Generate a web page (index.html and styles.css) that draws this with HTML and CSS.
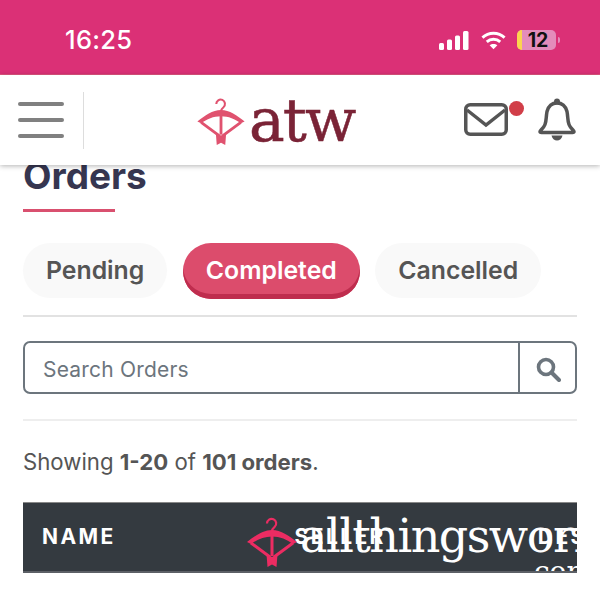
FILE: index.html
```html
<!DOCTYPE html>
<html lang="en">
<head>
    <meta charset="UTF-8">
    <meta name="viewport" content="width=device-width, initial-scale=1.0">
    <title>Orders</title>
    <link rel="stylesheet" href="styles.css">
</head>
<body>
    <svg class="defs" width="0" height="0">
        <symbol id="hanger" viewBox="0 0 50 54">
            <path d="M20 9.500a4.600 4.600 0 1 1 7.600 3.400c-1.600 1.300-2.600 2.200-2.600 4.600" fill="none" stroke="currentColor" stroke-width="2.200"/>
            <path d="M0 28C8 22 16 16 25 16S42 22 50 28L46 30C40 25.500 33 22.500 25 22.500S10 25.500 4 30Z" fill="currentColor"/>
            <path d="M4 29L23 43M46 29L27 43" fill="none" stroke="currentColor" stroke-width="3"/>
            <path d="M23.500 18h3v24h-3z" fill="currentColor"/>
            <path d="M19.500 40L25 43l5.500-3 -1 13 -4.500-2.500L20.500 53z" fill="currentColor"/>
        </symbol>
    </svg>

    <div class="status-bar">
        <span class="clock">16:25</span>
        <div class="status-icons">
            <svg class="signal" width="30" height="19" viewBox="0 0 30 19">
                <rect x="0" y="12" width="5" height="7" rx="1.500" fill="#fff"/>
                <rect x="8" y="8.500" width="5" height="10.500" rx="1.500" fill="#fff"/>
                <rect x="16" y="4.500" width="5" height="14.500" rx="1.500" fill="#fff"/>
                <rect x="24" y="0" width="5.500" height="19" rx="1.500" fill="#fff"/>
            </svg>
            <svg class="wifi" width="25" height="20" viewBox="0 0 26 20">
                <path d="M1.500 7.500C8 1.500 18 1.500 24.500 7.500" fill="none" stroke="#fff" stroke-width="3"/>
                <path d="M6 12C10 8.300 16 8.300 20 12" fill="none" stroke="#fff" stroke-width="3"/>
                <path d="M13 19.500L9 15.500C11.200 13.600 14.800 13.600 17 15.500Z" fill="#fff"/>
            </svg>
            <div class="battery"><span class="battery-level"></span><span class="battery-num">12</span></div>
            <span class="battery-tip"></span>
        </div>
    </div>

    <header class="top-nav">
        <button class="menu-btn" aria-label="Menu"><span></span><span></span><span></span></button>
        <div class="logo">
            <svg class="logo-mark" width="48" height="51"><use href="#hanger"/></svg>
            <span class="logo-text">atw</span>
        </div>
        <div class="nav-icons">
            <div class="mail">
                <svg width="44" height="33" viewBox="0 0 44 33">
                    <rect x="1.750" y="1.750" width="40.500" height="29.500" rx="4.500" fill="none" stroke="#555" stroke-width="3.500"/>
                    <path d="M3 7l19 15L41 7" fill="none" stroke="#555" stroke-width="3.500"/>
                </svg>
                <span class="mail-dot"></span>
            </div>
            <svg width="38" height="44" viewBox="0 0 38 44">
                <circle cx="19" cy="3.500" r="3" fill="#555"/>
                <path d="M2 33.500c0-1 3.500-3 5-7s1-8 2-13C10.500 8 14 5 19 5s8.500 3 10 8.500c1 5 .5 9 2 13s5 6 5 7c0 .5-.500 1-1.500 1H3.500c-1 0-1.500-.500-1.500-1z" fill="none" stroke="#555" stroke-width="3.500" stroke-linejoin="round"/>
                <path d="M13.500 37.500h11c-.5 3-3 5-5.500 5s-5-2-5.500-5z" fill="#555"/>
            </svg>
        </div>
    </header>

    <main class="content">
        <h1 class="page-title">Orders</h1>
        <div class="title-rule"></div>

        <div class="tabs">
            <a class="tab">Pending</a>
            <a class="tab active">Completed</a>
            <a class="tab">Cancelled</a>
        </div>

        <form class="search">
            <input type="text" placeholder="Search Orders">
            <button type="button" aria-label="Search">
                <svg width="26" height="26" viewBox="0 0 26 26">
                    <circle cx="11" cy="11" r="7.500" fill="none" stroke="#6c757d" stroke-width="3.600"/>
                    <path d="M16.500 16.500L24 24" stroke="#6c757d" stroke-width="4" stroke-linecap="round"/>
                </svg>
            </button>
        </form>

        <p class="count">Showing <b>1-20</b> of <b>101 orders</b>.</p>

        <div class="table-wrap">
            <div class="table-head">
                <span class="col-name">NAME</span>
                <span class="col-seller">SELLER</span>
                <span class="col-desc">DESCRIPTION</span>
            </div>
            <div class="watermark">
                <svg class="watermark-mark" width="50" height="54"><use href="#hanger"/></svg>
                <span class="watermark-text">allthingsworn</span>
                <span class="watermark-com">.com</span>
            </div>
        </div>
    </main>
</body>
</html>
```

FILE: styles.css
```css
* { box-sizing: border-box; }
html, body { margin: 0; height: 595px; overflow: hidden; }
body { font-family: Inter, "Liberation Sans", sans-serif; background: #fff; color: #555; }
.defs { position: absolute; }

.status-bar { height: 75px; background: #db3076; border-bottom: 1px solid #e2557f; display: flex; justify-content: space-between; align-items: flex-start; padding: 25px 40px 0 65px; }
.clock { color: #fff; font-size: 25.500px; line-height: 30px; font-weight: 500; letter-spacing: .3px; }
.status-icons { display: flex; align-items: center; margin-top: 5px; }
.signal { margin-right: 12px; }
.wifi { margin-right: 11px; }
.battery { width: 39px; height: 20px; border-radius: 5px; background: #e48cbb; position: relative; overflow: hidden; text-align: center; color: #111; font-size: 19.500px; line-height: 20px; font-weight: 700; padding-left: 3px; }
.battery-level { position: absolute; left: 0; top: 0; bottom: 0; width: 5px; background: #fbd54e; }
.battery-num { position: relative; }
.battery-tip { width: 2px; height: 6px; margin-left: 2px; background: #e48cbb; border-radius: 0 2px 2px 0; }

.top-nav { height: 90px; background: #fff; box-shadow: 0 1px 5px rgba(0,0,0,.3); display: flex; align-items: center; position: relative; z-index: 2; padding: 0 24px 0 18px; }
.menu-btn { width: 66px; height: 57px; border: 0; border-right: 1px solid #ddd; background: none; padding: 0 19px 0 0; display: flex; flex-direction: column; justify-content: center; gap: 12.500px; }
.menu-btn span { display: block; height: 3.500px; background: #808080; border-radius: 2px; }
.logo { display: flex; align-items: center; margin-left: 113px; color: #e0526f; }
.logo-text { font-family: "DejaVu Serif", serif; font-size: 60px; line-height: 60px; color: #7a2336; margin-left: 4px; letter-spacing: -2px; -webkit-text-stroke: .5px #7a2336; }
.nav-icons { display: flex; align-items: center; margin-left: auto; gap: 30px; }
.mail { position: relative; display: flex; margin-top: -2px; }
.mail-dot { position: absolute; right: -16px; top: -2px; width: 15px; height: 15px; border-radius: 50%; background: #d13e48; }

.content { padding: 0 23px; }
.page-title { margin: -4px 0 0; font-size: 37px; line-height: 30px; height: 30px; font-weight: 700; color: #363650; }
.title-rule { width: 92px; height: 3px; margin-top: 18px; background: #d9506f; }

.tabs { display: flex; gap: 15.500px; margin-top: 31px; padding-bottom: 16px; border-bottom: 2px solid #e2e2e2; }
.tab { height: 55px; padding: 0 23px; border-radius: 28px; background: #f9f9f9; font-size: 24.800px; line-height: 55px; font-weight: 600; color: #555; }
.tab.active { height: 56px; background: #dc4c6c; color: #fff; box-shadow: inset 0 -5px 0 #bf2d4e; }

.search { display: flex; height: 53px; margin-top: 24px; border: 2px solid #6c757d; border-radius: 7px; }
.search input { flex: 1; min-width: 0; border: 0; background: none; padding: 3px 18px 0; font: 400 21px Inter, sans-serif; letter-spacing: .2px; }
.search input::placeholder { color: #6c757d; opacity: 1; }
.search button { width: 57px; border: 0; border-left: 2px solid #6c757d; background: none; padding: 5px 0 0; }

.count { margin: 25px 0 0; padding-top: 26px; border-top: 2px solid #eee; font-size: 22.200px; line-height: 30px; }

.table-wrap { height: 71px; margin-top: 25px; background: #343a40; border-top: 1px solid #888; border-bottom: 2px solid #5c6066; position: relative; overflow: hidden; }
.table-head { display: flex; color: #fff; font-size: 21px; line-height: 68px; font-weight: 700; letter-spacing: 2.400px; white-space: nowrap; padding-left: 19px; }
.col-seller { margin-left: 179px; }
.col-desc { margin-left: 152px; }

.watermark { position: absolute; left: 224px; top: 11px; color: #fff; }
.watermark-mark { color: #ec2c62; position: absolute; left: 0; top: 0; }
.watermark-text { position: absolute; left: 53px; top: -8px; font-family: "DejaVu Serif", serif; font-size: 46px; line-height: 60px; letter-spacing: -1.500px; white-space: nowrap; }
.watermark-com { position: absolute; left: 278px; top: 43px; font-family: "DejaVu Serif", serif; font-size: 28px; line-height: 30px; }
```
